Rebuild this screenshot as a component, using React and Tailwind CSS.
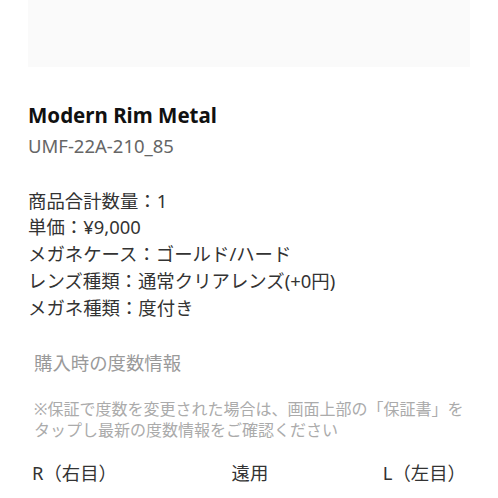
export default function App() {
  const font = { fontFamily: '"Noto Sans", "Noto Sans CJK JP", sans-serif' };
  return (
    <div className="w-[498px] h-[498px] overflow-hidden bg-white px-7" style={font}>
      <div className="h-[67px] bg-[#fafafa]" />
      <div className="pt-[33px]">
        <div className="text-[20.5px] leading-[31.5px] font-bold text-[#111]">Modern Rim Metal</div>
        <div className="text-[18.5px] leading-[27px] text-[#666]">UMF-22A-210_85</div>
      </div>
      <div className="mt-[29px] text-[18.4px] leading-[26.75px] text-[#333]">
        <div>商品合計数量：1</div>
        <div>単価：¥9,000</div>
        <div>メガネケース：ゴールド/ハード</div>
        <div>レンズ種類：通常クリアレンズ(+0円)</div>
        <div>メガネ種類：度付き</div>
      </div>
      <div className="mt-[28px] pl-[6px]">
        <div className="text-[18.4px] leading-[27px] text-[#9a9a9a]">購入時の度数情報</div>
        <div className="mt-[23px] text-[16px] leading-[20.5px] text-[#ababab]">
          ※保証で度数を変更された場合は、画面上部の「保証書」をタップし最新の度数情報をご確認ください
        </div>
        <div className="mt-[19px] mr-[4px] -ml-[2px] flex justify-between text-[18.4px] leading-[27px] text-[#333]">
          <span>R（右目）</span>
          <span>遠用</span>
          <span>L（左目）</span>
        </div>
      </div>
    </div>
  );
}
